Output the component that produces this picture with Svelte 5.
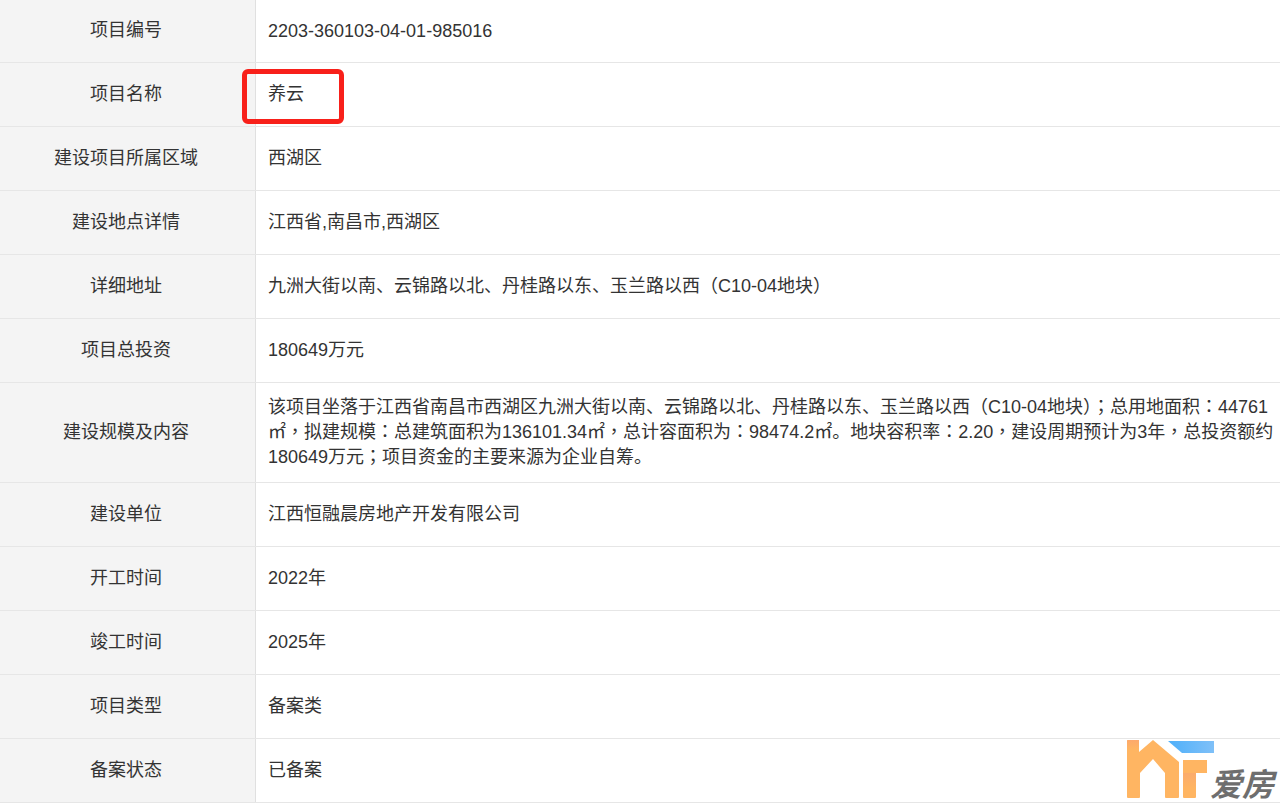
<script>
  const rows = [
    { label: '项目编号', value: '2203-360103-04-01-985016' },
    { label: '项目名称', value: '养云' },
    { label: '建设项目所属区域', value: '西湖区' },
    { label: '建设地点详情', value: '江西省,南昌市,西湖区' },
    { label: '详细地址', value: '九洲大街以南、云锦路以北、丹桂路以东、玉兰路以西\uFF08C10-04地块\uFF09' },
    { label: '项目总投资', value: '180649万元' },
    {
      label: '建设规模及内容',
      value:
        '该项目坐落于江西省南昌市西湖区九洲大街以南、云锦路以北、丹桂路以东、玉兰路以西\uFF08C10-04地块\uFF09\uFF1B总用地面积\uFF1A44761㎡\uFF0C拟建规模\uFF1A总建筑面积为136101.34㎡\uFF0C总计容面积为\uFF1A98474.2㎡。地块容积率\uFF1A2.20\uFF0C建设周期预计为3年\uFF0C总投资额约180649万元\uFF1B项目资金的主要来源为企业自筹。'
    },
    { label: '建设单位', value: '江西恒融晨房地产开发有限公司' },
    { label: '开工时间', value: '2022年' },
    { label: '竣工时间', value: '2025年' },
    { label: '项目类型', value: '备案类' },
    { label: '备案状态', value: '已备案' }
  ];

  // fullwidth , : ; sit centred in the reference, which the TC font does
  const parts = (text) => text.split(/([\uFF0C\uFF1A\uFF1B])/);
</script>

<div class="page">
  <div class="info">
    {#each rows as row}
      <div class="row">
        <div class="label">{row.label}</div>
        <div class="value">
          {#each parts(row.value) as part, i}{#if i % 2}<span class="punct">{part}</span>{:else}{part}{/if}{/each}
        </div>
      </div>
    {/each}
  </div>

  <div class="mark"></div>

  <div class="logo">
    <svg width="90" height="59" viewBox="0 0 90 59">
      <defs>
        <linearGradient id="blue" x1="0" y1="0" x2="1" y2="0">
          <stop offset="0" stop-color="#4fb0fa" />
          <stop offset="1" stop-color="#7fc0f8" />
        </linearGradient>
        <linearGradient id="stem" x1="0" y1="0" x2="0" y2="1">
          <stop offset="0" stop-color="#fbab6c" />
          <stop offset="1" stop-color="#ffb562" />
        </linearGradient>
        <linearGradient id="post" x1="0" y1="0" x2="0" y2="1">
          <stop offset="0" stop-color="#fda96c" />
          <stop offset="0.4" stop-color="#ffb562" />
        </linearGradient>
      </defs>
      <path
        d="M2 0h11v12L27 0l26 22v35a1 1 0 0 1-1 1H40a1 1 0 0 1-1-1V33L27 19 14 33v24a1 1 0 0 1-1 1H2a1 1 0 0 1-1-1V1a1 1 0 0 1 1-1z"
        fill="#ffb562"
      />
      <path d="M1 1a1 1 0 0 1 1-1h11v12L1 23z" fill="url(#post)" />
      <path d="M57 20h24v13H70v24a1 1 0 0 1-1 1H58a1 1 0 0 1-1-1z" fill="#ffb562" />
      <path d="M57 33h13v15H57z" fill="url(#stem)" />
      <path d="M42 1h46v12H56z" fill="url(#blue)" />
    </svg>
    <span class="brand">爱房</span>
  </div>
</div>

<style>
  :global(body) {
    margin: 0;
    background: #fff;
  }

  .page {
    position: relative;
    height: 806px;
    overflow: hidden;
    font-family: "Liberation Sans", "Noto Sans CJK SC", sans-serif;
    font-size: 18px;
    color: #333;
  }

  .row {
    display: flex;
    min-height: 63px;
    border-bottom: 1px solid #e6e6e6;
  }

  .row:first-child {
    min-height: 62px;
  }

  .label {
    box-sizing: border-box;
    flex: 0 0 256px;
    display: flex;
    align-items: center;
    justify-content: center;
    background: #f4f4f4;
    border-right: 1px solid #e0e0e0;
    padding-right: 3px;
    padding-bottom: 6px;
  }

  .value {
    flex: 1;
    align-self: center;
    padding: 12px 2px 12px 12px;
    line-height: 25px;
  }

  .punct {
    font-family: "Noto Sans CJK TC", sans-serif;
    line-height: 0;
  }

  .mark {
    position: absolute;
    left: 242px;
    top: 69px;
    width: 92px;
    height: 45px;
    border: 5px solid #f8201a;
    border-radius: 6px;
  }

  .logo {
    position: absolute;
    left: 1126px;
    top: 740px;
    width: 154px;
    height: 60px;
  }

  .logo svg {
    display: block;
  }

  .brand {
    position: absolute;
    left: 84px;
    top: 27px;
    font-size: 32px;
    line-height: 36px;
    font-weight: 700;
    font-style: italic;
    color: #6e6e6e;
    white-space: nowrap;
  }
</style>
